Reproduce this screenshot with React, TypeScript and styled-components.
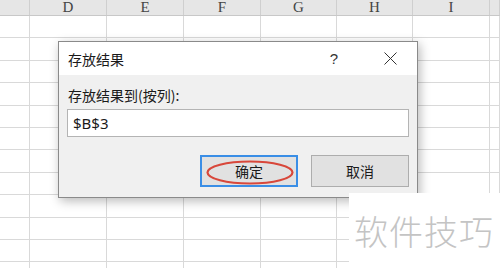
import styled, { createGlobalStyle } from 'styled-components';

const GlobalStyle = createGlobalStyle`
html, body {
  margin: 0;
  padding: 0;
  background: #ffffff;
}
`;

const PageStyle = styled.div`
position: relative;
width: 500px;
height: 268px;
overflow: hidden;
background: #ffffff;
font-family: "Noto Sans CJK SC", "Noto Sans", sans-serif;
`;

const COLUMNS = '30px 77px 77px 77px 76px 76px 77px 10px';

const HeaderRowStyle = styled.div`
display: grid;
grid-template-columns: ${COLUMNS};
height: 16px;
box-sizing: border-box;
background: #e6e6e6;
border-bottom: 1px solid #c8c8c8;
`;

const HeaderCellStyle = styled.div`
display: flex;
align-items: center;
justify-content: center;
box-sizing: border-box;
border-right: 1px solid #cfcfcf;
font-family: "Liberation Serif", serif;
font-size: 15px;
line-height: 15px;
color: #444444;
`;

const RowStyle = styled.div`
display: grid;
grid-template-columns: ${COLUMNS};
height: 22.4px;
box-sizing: border-box;
border-bottom: 1px solid #d9d9d9;
`;

const CellStyle = styled.div`
box-sizing: border-box;
border-right: 1px solid #d9d9d9;
`;

const DialogStyle = styled.div`
position: absolute;
left: 58px;
top: 41px;
width: 360px;
height: 157px;
box-sizing: border-box;
display: flex;
flex-direction: column;
background: #f0f0f0;
border: 1px solid #8a8a8a;
box-shadow: 2px 3px 10px rgba(0, 0, 0, 0.28);
`;

const TitleBarStyle = styled.div`
display: flex;
align-items: center;
height: 33px;
padding: 0 0 0 9px;
background: #ffffff;
`;

const TitleStyle = styled.div`
flex: 1;
font-size: 14px;
color: #1a1a1a;
`;

const TitleButtonStyle = styled.div<{ $width: number }>`
display: flex;
align-items: center;
justify-content: center;
width: ${(p) => p.$width}px;
height: 33px;
font-family: "Liberation Sans", sans-serif;
font-size: 15px;
color: #333333;
`;

const BodyStyle = styled.div`
display: flex;
flex-direction: column;
padding: 10px 8px 0 8px;
`;

const LabelStyle = styled.div`
font-size: 14px;
line-height: 20px;
color: #1a1a1a;
padding-left: 1px;
`;

const InputStyle = styled.div`
height: 28px;
margin-top: 4px;
box-sizing: border-box;
display: flex;
align-items: center;
padding-left: 5px;
background: #ffffff;
border: 1px solid #b4b4b4;
font-family: "Noto Sans", sans-serif;
font-size: 15px;
color: #1a1a1a;
`;

const ButtonRowStyle = styled.div`
display: flex;
justify-content: flex-end;
gap: 13px;
margin-top: 18px;
`;

const ButtonStyle = styled.div<{ $primary?: boolean }>`
position: relative;
width: 98px;
height: 32px;
box-sizing: border-box;
display: flex;
align-items: center;
justify-content: center;
background: #e1e1e1;
border: ${(p) => (p.$primary ? '2px solid #3a8ee6' : '1px solid #adadad')};
font-size: 14px;
color: #1a1a1a;
`;

const MarkStyle = styled.svg`
position: absolute;
left: 4px;
top: 3px;
`;

const WatermarkStyle = styled.div`
position: absolute;
left: 349px;
top: 193px;
width: 151px;
height: 75px;
display: flex;
align-items: center;
padding-left: 5px;
box-sizing: border-box;
background: #ffffff;
font-size: 34px;
font-weight: 300;
letter-spacing: 1px;
color: #c4c4c4;
`;

const letters = ['', 'D', 'E', 'F', 'G', 'H', 'I', ''];

const App = () => (
  <PageStyle>
    <GlobalStyle />
    <HeaderRowStyle>
      {letters.map((l, i) => (
        <HeaderCellStyle key={i}>{l}</HeaderCellStyle>
      ))}
    </HeaderRowStyle>
    {Array.from({ length: 12 }).map((_, r) => (
      <RowStyle key={r}>
        {letters.map((_, c) => (
          <CellStyle key={c} />
        ))}
      </RowStyle>
    ))}

    <DialogStyle>
      <TitleBarStyle>
        <TitleStyle>存放结果</TitleStyle>
        <TitleButtonStyle $width={58}>?</TitleButtonStyle>
        <TitleButtonStyle $width={54}>
          <svg width="13" height="13" viewBox="0 0 13 13">
            <path d="M0.5 0.5 L12.5 12.5 M12.5 0.5 L0.5 12.5" stroke="#333" strokeWidth="1" />
          </svg>
        </TitleButtonStyle>
      </TitleBarStyle>
      <BodyStyle>
        <LabelStyle>存放结果到(按列):</LabelStyle>
        <InputStyle>$B$3</InputStyle>
        <ButtonRowStyle>
          <ButtonStyle $primary>
            确定
            <MarkStyle width="88" height="25" viewBox="0 0 88 25">
              <ellipse cx="44" cy="12.5" rx="42.5" ry="11" fill="none" stroke="#d8473a" strokeWidth="2.2" />
            </MarkStyle>
          </ButtonStyle>
          <ButtonStyle>取消</ButtonStyle>
        </ButtonRowStyle>
      </BodyStyle>
    </DialogStyle>

    <WatermarkStyle>软件技巧</WatermarkStyle>
  </PageStyle>
);

export default App;
